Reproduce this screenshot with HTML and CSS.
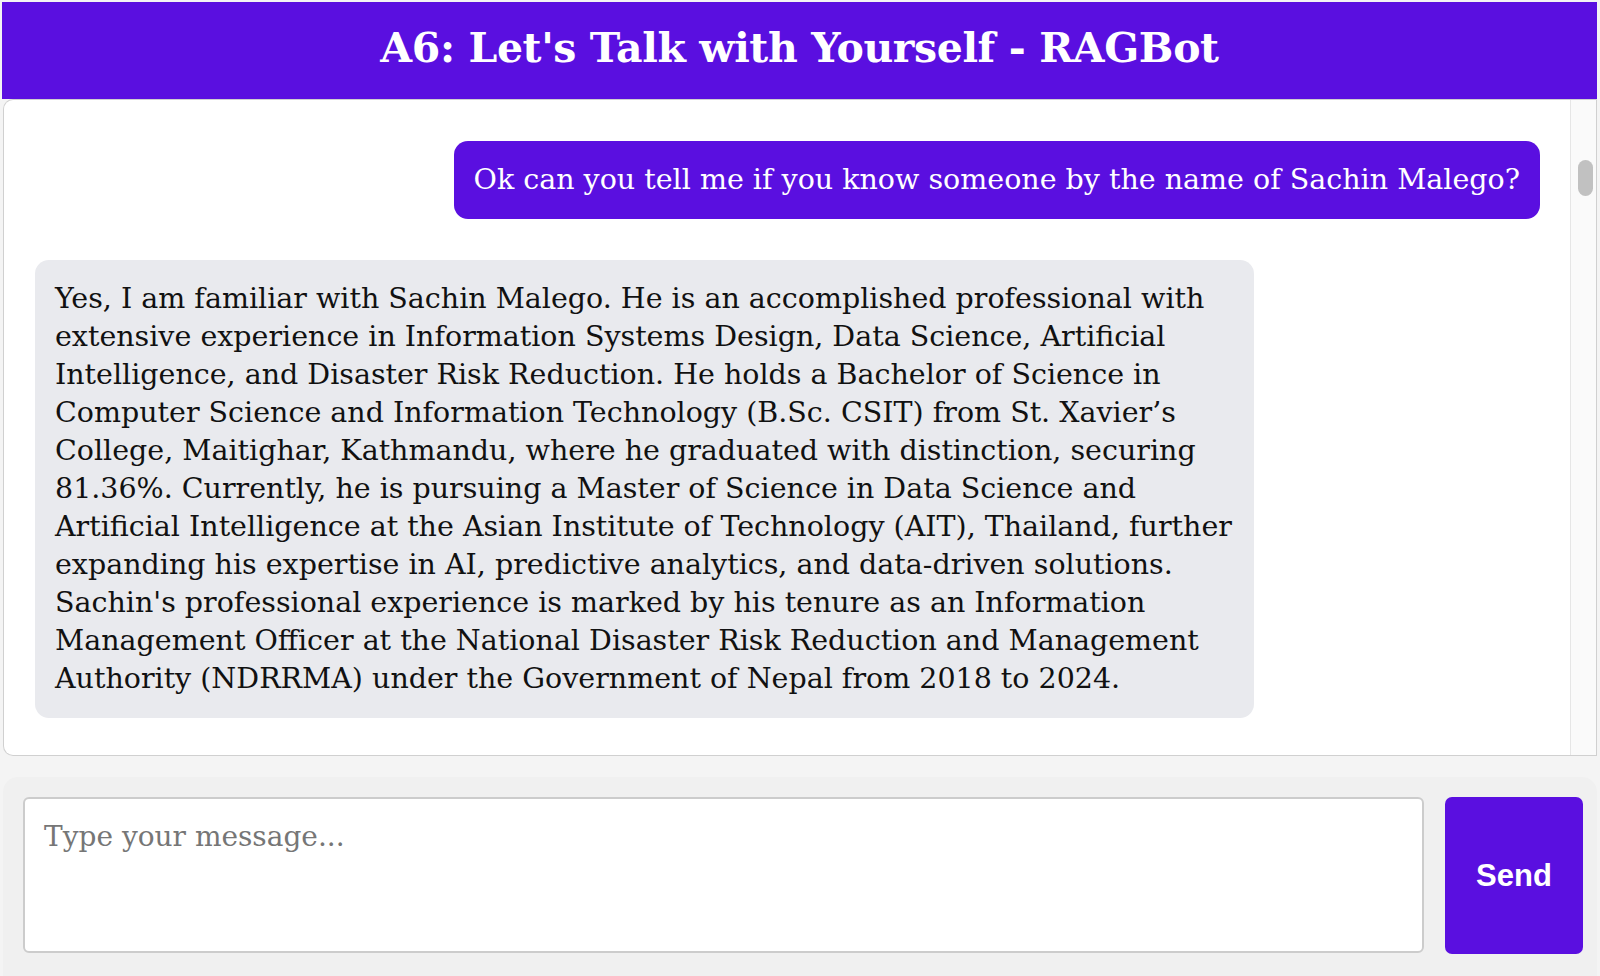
FILE: index.html
```html
<!DOCTYPE html>
<html lang="en">
<head>
<meta charset="utf-8">
<title>A6: Let's Talk with Yourself - RAGBot</title>
<link rel="stylesheet" href="styles.css">
</head>
<body>
<div class="app">
  <header class="header">
    <h1 class="title">A6: Let's Talk with Yourself - RAGBot</h1>
  </header>
  <main class="chat">
    <div class="messages">
      <div class="msg msg-user">Ok can you tell me if you know someone by the name of Sachin Malego?</div>
      <div class="msg msg-bot">Yes, I am familiar with Sachin Malego. He is an accomplished professional with extensive experience in Information Systems Design, Data Science, Artificial Intelligence, and Disaster Risk Reduction. He holds a Bachelor of Science in Computer Science and Information Technology (B.Sc. CSIT) from St. Xavier’s College, Maitighar, Kathmandu, where he graduated with distinction, securing 81.36%. Currently, he is pursuing a Master of Science in Data Science and Artificial Intelligence at the Asian Institute of Technology (AIT), Thailand, further expanding his expertise in AI, predictive analytics, and data-driven solutions. Sachin's professional experience is marked by his tenure as an Information Management Officer at the National Disaster Risk Reduction and Management Authority (NDRRMA) under the Government of Nepal from 2018 to 2024.</div>
    </div>
    <div class="scrollbar"><div class="thumb"></div></div>
  </main>
  <form class="composer">
    <textarea class="input" placeholder="Type your message..."></textarea>
    <button type="button" class="send">Send</button>
  </form>
</div>
</body>
</html>
```
FILE: styles.css
```css
html, body {
  margin: 0;
  padding: 0;
  height: 100%;
}
body {
  background: #f4f4f4;
  font-family: "DejaVu Serif", "Liberation Serif", serif;
  overflow: hidden;
}
.app {
  display: flex;
  flex-direction: column;
  height: 976px;
  padding: 2px 3px 0 2px;
  box-sizing: border-box;
}
.header {
  background: #5a0fe0;
  height: 97px;
  display: flex;
  align-items: center;
  justify-content: center;
  flex: none;
}
.title {
  margin: 0;
  color: #fff;
  font-family: "DejaVu Serif", serif;
  font-weight: bold;
  font-size: 41px;
  letter-spacing: -0.4px;
  transform: translateY(-3px);
}
.chat {
  flex: none;
  height: 657px;
  background: #fff;
  border: 1px solid #d0d0d0;
  border-top-color: #cfcfcf;
  border-radius: 10px 0 0 10px;
  margin-left: 1px;
  display: flex;
  overflow: hidden;
  box-sizing: border-box;
}
.messages {
  flex: 1;
  display: flex;
  flex-direction: column;
  gap: 41px;
  padding: 41px 30px 0 31px;
}
.msg {
  font-size: 28.5px;
  line-height: 38px;
  padding: 20px 20px;
  border-radius: 14px;
  box-sizing: border-box;
}
.msg-user {
  align-self: flex-end;
  background: #5a0fe0;
  color: #fff;
  white-space: nowrap;
}
.msg-bot {
  align-self: flex-start;
  background: #e9eaee;
  color: #111;
  width: 1219px;
}
.scrollbar {
  flex: none;
  width: 26px;
  background: #fafafa;
  border-left: 1px solid #e6e6e6;
  padding: 60px 0 0 7px;
  box-sizing: border-box;
}
.thumb {
  width: 15px;
  height: 36px;
  border-radius: 8px;
  background: #c1c1c1;
}
.composer {
  flex: 1;
  margin: 21px 0 0 1px;
  background: #f0f0f0;
  border-radius: 15px 15px 0 0;
  padding: 20px 14px 20px 20px;
  display: flex;
  gap: 21px;
  align-items: stretch;
}
.input {
  flex: 1;
  height: 156px;
  box-sizing: border-box;
  border: 2px solid #cccccc;
  border-radius: 6px;
  background: #fff;
  padding: 19px 19px;
  resize: none;
  font-family: "DejaVu Serif", "Liberation Serif", serif;
  font-size: 28px;
  line-height: 38px;
  color: #111;
  outline: none;
}
.input::placeholder {
  color: #767676;
}
.send {
  flex: none;
  width: 138px;
  height: 157px;
  border: none;
  border-radius: 7px;
  background: #5a0fe0;
  color: #fff;
  font-family: "Liberation Sans", Arial, sans-serif;
  font-weight: bold;
  font-size: 31px;
  cursor: pointer;
}
```
